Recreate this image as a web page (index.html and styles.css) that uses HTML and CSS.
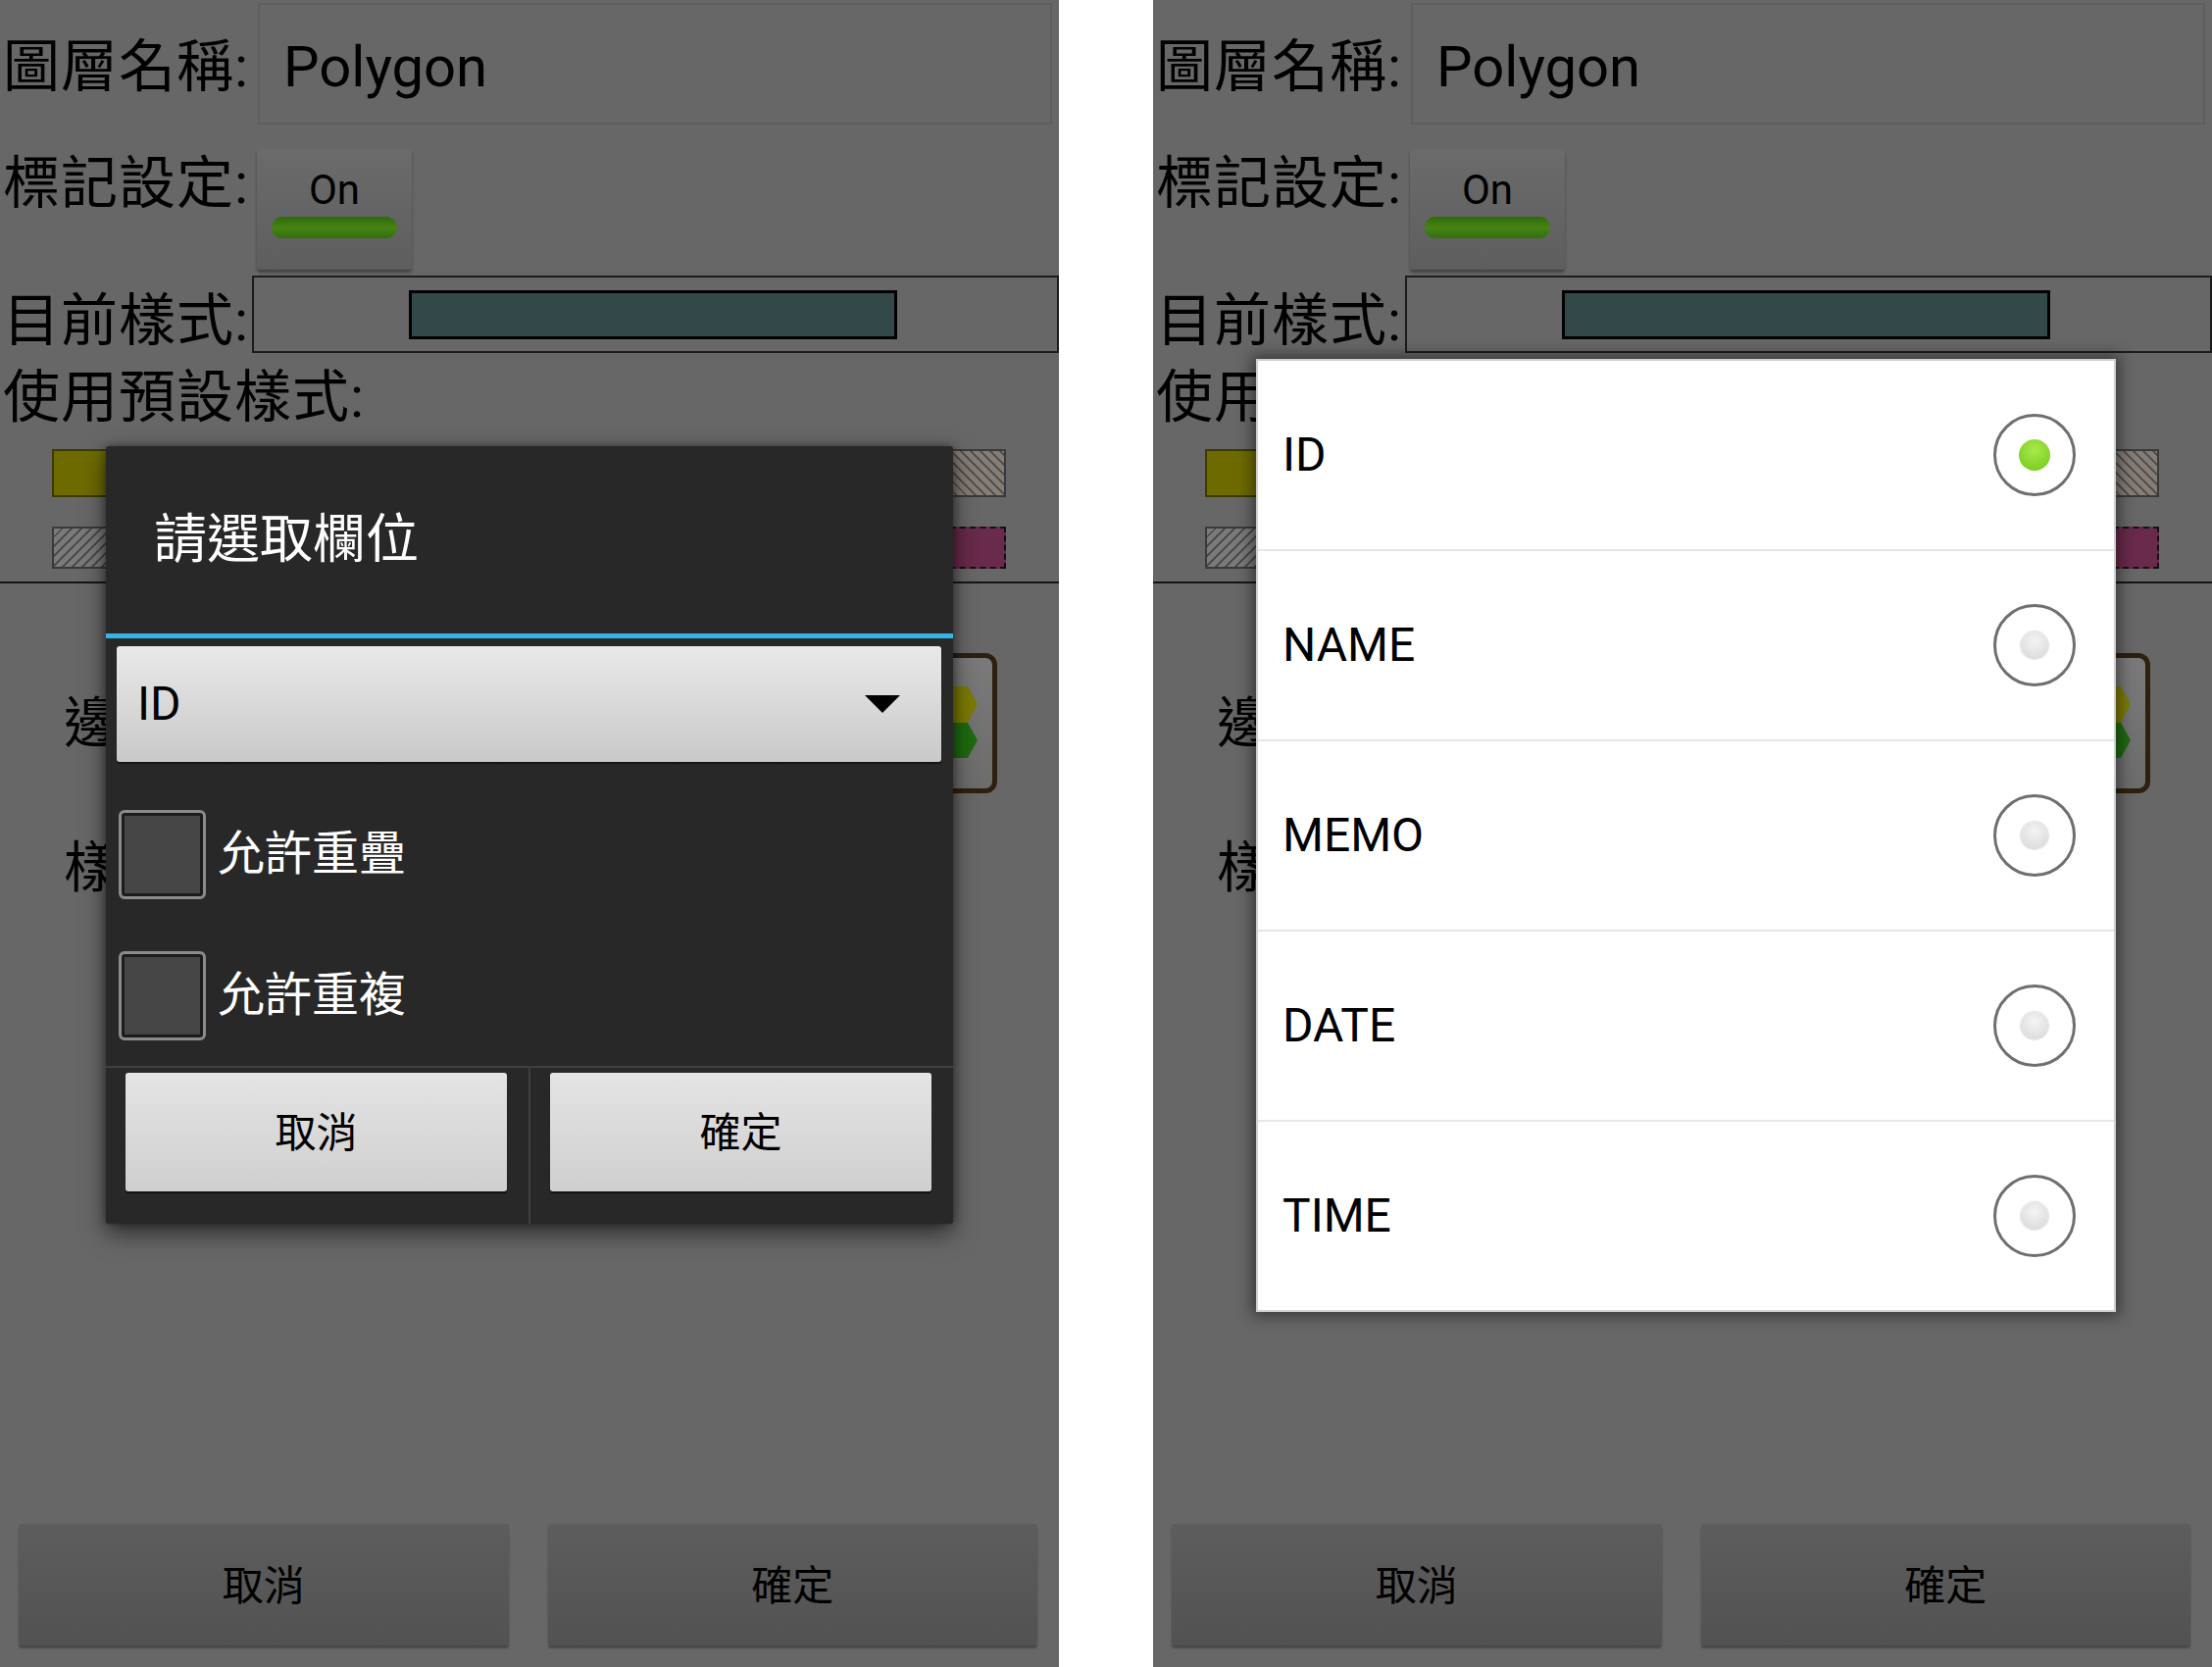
FILE: index.html
```html
<!DOCTYPE html>
<html lang="zh-Hant">

<head>
    <meta charset="UTF-8">
    <meta name="viewport" content="width=device-width, initial-scale=1.0">
    <title>圖層設定</title>
    <link rel="stylesheet" href="styles.css">
</head>

<body>
    <div class="screens">

        <!-- 左邊: 選取欄位對話框 -->
        <div class="phone">
            <div class="row-name">
                <span class="label">圖層名稱:</span>
                <div class="name-input">Polygon</div>
            </div>
            <div class="row-mark">
                <span class="label">標記設定:</span>
                <div class="toggle">
                    <span class="toggle-text">On</span>
                    <span class="toggle-bar"></span>
                </div>
            </div>
            <div class="row-style">
                <span class="label">目前樣式:</span>
                <div class="style-box">
                    <div class="style-swatch"></div>
                </div>
            </div>
            <div class="row-preset">
                <span class="label">使用預設樣式:</span>
            </div>
            <div class="swatches">
                <span class="sw sw-yellow"></span>
                <span class="sw sw-blue"></span>
                <span class="sw sw-red"></span>
                <span class="sw sw-hatch-b"></span>
            </div>
            <div class="swatches swatches-2">
                <span class="sw sw-hatch-a"></span>
                <span class="sw sw-green"></span>
                <span class="sw sw-orange"></span>
                <span class="sw sw-magenta"></span>
            </div>
            <div class="divider"></div>
            <div class="row-border">
                <span class="label label-sm">邊</span>
                <div class="border-btn">
                    <svg width="130" height="133" viewBox="0 0 130 133">
                        <polygon points="115,47 105,29 85,29 75,47 85,66 105,66" fill="#7c7a05" />
                        <polygon points="115,84 105,66 85,66 75,84 85,102 105,102" fill="#1f6a10" />
                    </svg>
                </div>
            </div>
            <div class="row-fill">
                <span class="label label-sm">樣</span>
            </div>
            <div class="bottom-bar">
                <div class="bar-btn">取消</div>
                <div class="bar-btn">確定</div>
            </div>

            <div class="dialog">
                <div class="dialog-title">請選取欄位</div>
                <div class="dialog-rule"></div>
                <div class="spinner">
                    <span>ID</span>
                    <svg width="36" height="18" viewBox="0 0 36 18">
                        <polygon points="0,0 36,0 18,18" fill="#000" />
                    </svg>
                </div>
                <div class="checks">
                    <div class="check-row">
                        <span class="check-box"></span>
                        <span>允許重疊</span>
                    </div>
                    <div class="check-row">
                        <span class="check-box"></span>
                        <span>允許重複</span>
                    </div>
                </div>
                <div class="dialog-actions">
                    <div class="dialog-half">
                        <div class="dlg-btn">取消</div>
                    </div>
                    <div class="dialog-half">
                        <div class="dlg-btn">確定</div>
                    </div>
                </div>
            </div>
        </div>

        <!-- 右邊: 下拉選單 -->
        <div class="phone">
            <div class="row-name">
                <span class="label">圖層名稱:</span>
                <div class="name-input">Polygon</div>
            </div>
            <div class="row-mark">
                <span class="label">標記設定:</span>
                <div class="toggle">
                    <span class="toggle-text">On</span>
                    <span class="toggle-bar"></span>
                </div>
            </div>
            <div class="row-style">
                <span class="label">目前樣式:</span>
                <div class="style-box">
                    <div class="style-swatch"></div>
                </div>
            </div>
            <div class="row-preset">
                <span class="label">使用預設樣式:</span>
            </div>
            <div class="swatches">
                <span class="sw sw-yellow"></span>
                <span class="sw sw-blue"></span>
                <span class="sw sw-red"></span>
                <span class="sw sw-hatch-b"></span>
            </div>
            <div class="swatches swatches-2">
                <span class="sw sw-hatch-a"></span>
                <span class="sw sw-green"></span>
                <span class="sw sw-orange"></span>
                <span class="sw sw-magenta"></span>
            </div>
            <div class="divider"></div>
            <div class="row-border">
                <span class="label label-sm">邊</span>
                <div class="border-btn">
                    <svg width="130" height="133" viewBox="0 0 130 133">
                        <polygon points="115,47 105,29 85,29 75,47 85,66 105,66" fill="#7c7a05" />
                        <polygon points="115,84 105,66 85,66 75,84 85,102 105,102" fill="#1f6a10" />
                    </svg>
                </div>
            </div>
            <div class="row-fill">
                <span class="label label-sm">樣</span>
            </div>
            <div class="bottom-bar">
                <div class="bar-btn">取消</div>
                <div class="bar-btn">確定</div>
            </div>

            <div class="picker">
                <div class="pick-row radio-on">
                    <span>ID</span>
                    <span class="radio"><span class="radio-dot"></span></span>
                </div>
                <div class="pick-row">
                    <span>NAME</span>
                    <span class="radio"><span class="radio-dot"></span></span>
                </div>
                <div class="pick-row">
                    <span>MEMO</span>
                    <span class="radio"><span class="radio-dot"></span></span>
                </div>
                <div class="pick-row">
                    <span>DATE</span>
                    <span class="radio"><span class="radio-dot"></span></span>
                </div>
                <div class="pick-row">
                    <span>TIME</span>
                    <span class="radio"><span class="radio-dot"></span></span>
                </div>
            </div>
        </div>

    </div>
</body>

</html>
```

FILE: styles.css
```css
* {
    box-sizing: border-box;
    margin: 0;
    padding: 0;
}

body {
    background: #fff;
    font-family: Roboto, "Noto Sans CJK TC", sans-serif;
}

.screens {
    display: flex;
    gap: 96px;
    width: 2256px;
    height: 1700px;
    overflow: hidden;
}

/* 一支手機畫面 (背後已被對話框調暗) */
.phone {
    position: relative;
    width: 1080px;
    height: 1700px;
    background: #676767;
    color: #000;
    display: flex;
    flex-direction: column;
    overflow: hidden;
}

.label {
    display: block;
    font-size: 58px;
    line-height: 1;
    letter-spacing: 1px;
    white-space: nowrap;
}

.label-sm {
    font-size: 56px;
}

/* 圖層名稱 */
.row-name {
    display: flex;
    height: 130px;
}

.row-name .label {
    width: 260px;
    padding-left: 3px;
    margin-top: 39px;
}

.name-input {
    flex: 1;
    height: 124px;
    margin: 3px 7px 0 3px;
    border: 2px solid #5e5e5e;
    display: flex;
    align-items: center;
    padding: 6px 0 0 24px;
    font-size: 58px;
    line-height: 1;
}

/* 標記設定 */
.row-mark {
    display: flex;
    height: 150px;
}

.row-mark .label {
    width: 260px;
    padding-left: 3px;
    margin-top: 28px;
}

.toggle {
    width: 158px;
    height: 123px;
    margin: 22px 0 0 2px;
    border-radius: 4px;
    background: linear-gradient(#6b6b6b, #5e5e5e);
    box-shadow: 0 3px 3px rgba(0, 0, 0, 0.35);
    display: flex;
    flex-direction: column;
    align-items: center;
    padding-top: 21px;
}

.toggle-text {
    font-size: 42px;
    line-height: 1;
}

.toggle-bar {
    width: 128px;
    height: 22px;
    margin-top: 6px;
    border-radius: 11px;
    background: linear-gradient(#2e680a, #468514 50%, #336e0c);
}

/* 目前樣式 */
.row-style {
    display: flex;
    height: 79px;
    margin-top: 1px;
}

.row-style .label {
    width: 257px;
    padding-left: 3px;
    margin-top: 17px;
}

.style-box {
    flex: 1;
    border: 2px solid #1c1c1c;
}

.style-swatch {
    width: 498px;
    height: 50px;
    margin: 13px 0 0 158px;
    background: #334848;
    border: 3px solid #000;
}

/* 使用預設樣式 */
.row-preset .label {
    padding-left: 3px;
    margin-top: 16px;
}

.swatches {
    display: flex;
    justify-content: space-between;
    padding: 0 54px 0 53px;
    margin-top: 24px;
}

.sw {
    display: block;
    width: 150px;
    height: 49px;
    border: 2px solid #3a3a3a;
}

.swatches-2 {
    margin-top: 30px;
}

.swatches-2 .sw {
    height: 43px;
}

.sw-yellow {
    background: #6d6b00;
    border-color: #3c3a00;
}

.sw-blue {
    background: #2d3f66;
}

.sw-red {
    background: #6a2a22;
}

.sw-green {
    background: #2e5a2a;
}

.sw-orange {
    background: #6e4a1a;
}

.sw-hatch-a {
    background: repeating-linear-gradient(135deg, #7a7a7a 0 5px, #4c4c4c 5px 7px);
}

.sw-hatch-b {
    background: repeating-linear-gradient(45deg, #857d77 0 5px, #56504c 5px 7px);
}

.sw-magenta {
    background: #692a4b;
    border: 2px dashed #111;
}

.divider {
    height: 2px;
    margin-top: 13px;
    background: #151515;
}

/* 邊框 / 樣式 */
.row-border {
    display: flex;
    align-items: center;
    height: 143px;
    margin-top: 71px;
    padding-left: 65px;
}

.border-btn {
    width: 140px;
    height: 143px;
    margin-left: auto;
    margin-right: 63px;
    border: 5px solid #2e200f;
    border-radius: 12px;
    background: linear-gradient(#7a7a7a, #6c6c6c);
}

.border-btn svg {
    display: block;
}

.row-fill {
    margin-top: 48px;
    padding-left: 65px;
}

/* 底部按鈕 */
.bottom-bar {
    display: flex;
    gap: 40px;
    margin-top: auto;
    padding: 0 22px 22px 19px;
}

.bar-btn {
    flex: 1;
    height: 124px;
    padding-bottom: 5px;
    border-radius: 3px;
    background: linear-gradient(#5d5d5d, #525252);
    box-shadow: 0 3px 2px rgba(0, 0, 0, 0.3);
    display: flex;
    align-items: center;
    justify-content: center;
    font-size: 42px;
}

/* 左: 對話框 */
.dialog {
    position: absolute;
    left: 108px;
    top: 455px;
    width: 864px;
    height: 793px;
    background: #282828;
    border-radius: 3px;
    box-shadow: 0 10px 25px rgba(0, 0, 0, 0.55), 0 0 8px rgba(0, 0, 0, 0.4);
    display: flex;
    flex-direction: column;
}

.dialog-title {
    height: 191px;
    display: flex;
    align-items: center;
    padding-left: 49px;
    color: #fff;
    font-size: 54px;
    line-height: 1;
}

.dialog-rule {
    height: 5px;
    background: #33b5e5;
}

.spinner {
    height: 118px;
    margin: 8px 12px 0 11px;
    padding: 0 42px 0 21px;
    border-radius: 3px;
    background: linear-gradient(#e9e9e9, #c9c9c9);
    box-shadow: 0 2px 1px rgba(0, 0, 0, 0.5);
    display: flex;
    align-items: center;
    justify-content: space-between;
    font-size: 48px;
    line-height: 1;
}

.checks {
    margin-top: 22px;
}

.check-row {
    height: 144px;
    display: flex;
    align-items: center;
    gap: 12px;
    padding-left: 13px;
    color: #fff;
    font-size: 48px;
    line-height: 1;
}

.check-box {
    width: 89px;
    height: 91px;
    border: 3px solid #8b8b8b;
    border-radius: 6px;
    background: #464646;
    box-shadow: inset 0 0 0 3px #1c1c1c;
}

.dialog-actions {
    flex: 1;
    display: flex;
    border-top: 2px solid #3f3f3f;
}

.dialog-half {
    flex: 1;
    padding: 5px 22px 0 20px;
}

.dialog-half+.dialog-half {
    border-left: 2px solid #3f3f3f;
}

.dlg-btn {
    height: 121px;
    padding-bottom: 6px;
    border-radius: 3px;
    background: linear-gradient(#e4e4e4, #cfcfcf);
    box-shadow: 0 2px 1px rgba(0, 0, 0, 0.6);
    display: flex;
    align-items: center;
    justify-content: center;
    font-size: 42px;
}

/* 右: 下拉清單 */
.picker {
    position: absolute;
    left: 105px;
    top: 366px;
    width: 877px;
    height: 972px;
    background: #fff;
    border: 2px solid #cfcfcf;
    box-shadow: 0 0 14px 4px rgba(0, 0, 0, 0.45);
    display: flex;
    flex-direction: column;
}

.pick-row {
    flex: 1;
    display: flex;
    align-items: center;
    justify-content: space-between;
    padding: 0 39px 0 25px;
    font-size: 48px;
    line-height: 1;
}

.pick-row+.pick-row {
    border-top: 2px solid #e6e6e6;
}

.radio {
    width: 84px;
    height: 84px;
    border-radius: 50%;
    border: 3px solid #6f6f6f;
    display: flex;
    align-items: center;
    justify-content: center;
}

.radio-dot {
    width: 28px;
    height: 28px;
    border-radius: 50%;
    background: radial-gradient(circle at 50% 35%, #f4f4f4, #d6d6d6);
    box-shadow: 0 0 1px 1px rgba(0, 0, 0, 0.12);
}

.radio-on .radio-dot {
    width: 32px;
    height: 32px;
    background: radial-gradient(circle at 50% 35%, #a8ea4c, #70c618);
    box-shadow: none;
}
```
